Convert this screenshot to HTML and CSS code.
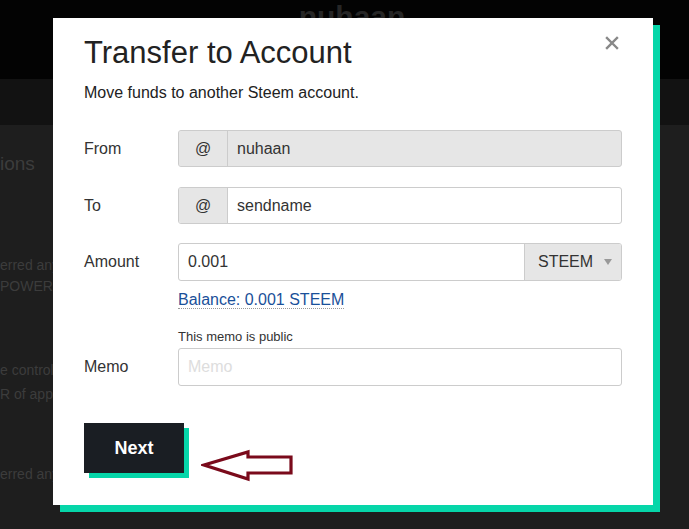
FILE: index.html
```html
<!DOCTYPE html>
<html lang="en">
<head>
    <meta charset="UTF-8">
    <title>Transfer to Account</title>
    <link rel="stylesheet" href="styles.css">
</head>
<body>
    <div class="page">
        <div class="header">
            <div class="user-name">nuhaan</div>
        </div>
        <div class="tabs"></div>
        <div class="content">
            <div class="section-title">ions</div>
            <div class="text-block first">
                <div>erred any</div>
                <div>POWER i</div>
            </div>
            <div class="text-block second">
                <div>e control</div>
                <div>R of appr</div>
            </div>
            <div class="text-block third">
                <div>erred any</div>
            </div>
        </div>
    </div>

    <div class="modal">
        <div class="modal-head">
            <h1 class="modal-title">Transfer to Account</h1>
            <div class="close-btn">
                <svg width="14" height="14" viewBox="0 0 14 14">
                    <path d="M2 2 L12 12 M12 2 L2 12" stroke="#888" stroke-width="2.4" stroke-linecap="square"/>
                </svg>
            </div>
        </div>
        <p class="modal-sub">Move funds to another Steem account.</p>

        <div class="form-row">
            <div class="label">From</div>
            <div class="field">
                <div class="input-group disabled">
                    <span class="addon">@</span>
                    <span class="input-text">nuhaan</span>
                </div>
            </div>
        </div>

        <div class="form-row">
            <div class="label">To</div>
            <div class="field">
                <div class="input-group">
                    <span class="addon">@</span>
                    <span class="input-text">sendname</span>
                </div>
            </div>
        </div>

        <div class="form-row amount-row">
            <div class="label">Amount</div>
            <div class="field">
                <div class="input-group">
                    <span class="input-text">0.001</span>
                    <span class="asset-select">STEEM <span class="caret"></span></span>
                </div>
                <div class="balance"><span class="balance-link">Balance: 0.001 STEEM</span></div>
            </div>
        </div>

        <div class="form-row memo-row">
            <div class="label">Memo</div>
            <div class="field">
                <div class="memo-note">This memo is public</div>
                <div class="input-group">
                    <span class="input-text placeholder">Memo</span>
                </div>
            </div>
        </div>

        <div class="actions">
            <div class="next-btn">Next</div>
            <svg class="arrow" width="94" height="34" viewBox="0 0 94 34">
                <path d="M3 16 L47 3 L47 8 L90 8 L90 24 L47 24 L47 30 Z" fill="none" stroke="#7a0a1b" stroke-width="3.2" stroke-linejoin="miter"/>
            </svg>
        </div>
    </div>
</body>
</html>
```

FILE: styles.css
```css
body {
    margin: 0;
    font-family: 'Liberation Sans', Arial, sans-serif;
    background: #1e1e1e;
    overflow: hidden;
}
.page {
    height: 529px;
    overflow: hidden;
}
.header {
    height: 79px;
    background: #030303;
    display: flex;
    justify-content: center;
    padding-left: 15px;
}
.user-name {
    font-size: 30px;
    font-weight: bold;
    color: #262626;
    line-height: 34px;
}
.tabs {
    height: 46px;
    background: #121212;
}
.content {
    color: #3c3c3c;
    font-size: 14px;
}
.section-title {
    font-size: 19px;
    padding-top: 27px;
    line-height: 24px;
}
.text-block {
    line-height: 21px;
}
.text-block.first {
    padding-top: 79px;
}
.text-block.second {
    padding-top: 61px;
    line-height: 24px;
}
.text-block.third {
    padding-top: 58px;
}

.modal {
    position: absolute;
    left: 53px;
    top: 18px;
    width: 600px;
    height: 487px;
    box-sizing: border-box;
    background: #fff;
    box-shadow: 7px 7px 0 #06d6a9;
    padding: 18px 31px 0 31px;
    color: #333;
}
.modal-head {
    display: flex;
    justify-content: space-between;
    align-items: flex-start;
}
.modal-title {
    margin: 0;
    font-size: 31px;
    font-weight: normal;
    line-height: 34px;
    color: #222;
}
.close-btn {
    margin-right: 3px;
}
.modal-sub {
    margin: 13px 0 0 0;
    font-size: 16px;
    line-height: 20px;
    color: #222;
}
.form-row {
    display: flex;
    align-items: center;
    margin-top: 20px;
}
.modal-sub + .form-row {
    margin-top: 27px;
}
.label {
    width: 94px;
    flex-shrink: 0;
    font-size: 16px;
    color: #333;
}
.field {
    width: 444px;
}
.input-group {
    display: flex;
    height: 37px;
    box-sizing: border-box;
    border: 1px solid #ccc;
    border-radius: 3px;
    font-size: 16px;
    overflow: hidden;
}
.input-group.disabled {
    background: #e6e6e6;
}
.addon {
    width: 48px;
    background: #e6e6e6;
    border-right: 1px solid #ccc;
    display: flex;
    align-items: center;
    justify-content: center;
    color: #333;
}
.input-text {
    flex: 1;
    display: flex;
    align-items: center;
    padding-left: 9px;
    color: #333;
}
.input-text.placeholder {
    color: #ddd;
}
.asset-select {
    width: 97px;
    background: #e6e6e6;
    border-left: 1px solid #ccc;
    display: flex;
    align-items: center;
    padding-left: 13px;
    box-sizing: border-box;
    color: #333;
}
.caret {
    margin-left: 11px;
    width: 0;
    height: 0;
    border-left: 4px solid transparent;
    border-right: 4px solid transparent;
    border-top: 6px solid #999;
}
.amount-row {
    align-items: flex-start;
    margin-top: 19px;
}
.amount-row .label {
    line-height: 37px;
}
.amount-row .input-group {
    height: 38px;
}
.balance {
    margin-top: 10px;
    font-size: 16px;
    line-height: 18px;
}
.balance-link {
    color: #1a5099;
    border-bottom: 1px dotted #999;
}
.memo-row {
    align-items: flex-end;
    margin-top: 20px;
}
.memo-row .label {
    line-height: 38px;
}
.memo-row .input-group {
    height: 38px;
}
.memo-note {
    font-size: 13px;
    line-height: 16px;
    margin-bottom: 3px;
    color: #333;
}
.actions {
    display: flex;
    align-items: flex-start;
    margin-top: 37px;
}
.next-btn {
    width: 100px;
    height: 50px;
    background: #1a1e23;
    color: #fff;
    font-weight: bold;
    font-size: 18px;
    display: flex;
    align-items: center;
    justify-content: center;
    box-shadow: 5px 5px 0 #06d6a9;
}
.arrow {
    margin-left: 17px;
    margin-top: 26px;
}
```
